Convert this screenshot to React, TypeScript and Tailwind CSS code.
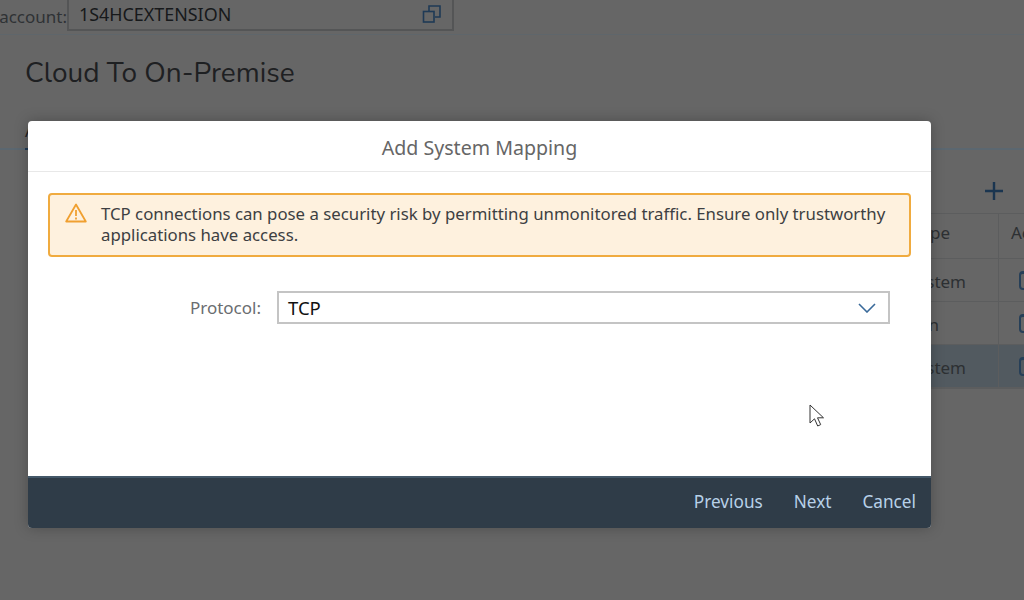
import React from "react";

function Row({ text, pad, tint }: { text: string; pad: string; tint?: boolean }) {
  return (
    <div className={`flex h-[43px] border-b border-[#5c5d5e] ${tint ? "bg-[#525a60]" : ""}`}>
      <div className={`flex-1 flex items-center justify-end pt-[3px] ${pad} border-r border-[#5c5d5e] text-[17px] text-[#2d3033]`}>{text}</div>
      <div className="w-[25px] flex items-center pl-[20px] overflow-hidden">
        <div className="w-[12px] h-[19px] shrink-0 border-2 border-t-[3px] border-[#263f58] rounded-sm" />
      </div>
    </div>
  );
}

export default function App() {
  return (
    <div className="relative w-[1024px] h-[600px] overflow-hidden bg-[#666666] font-['Noto_Sans','Open_Sans',sans-serif]">
      <div className="flex items-center h-[35px] border-b border-[#5f666b]">
        <span className="text-[17px] text-[#2f3235] w-[67px] overflow-hidden whitespace-nowrap flex justify-end">account:</span>
        <div className="flex items-center justify-between w-[387px] h-[31px] -mt-[4px] border-2 border-[#545556] border-t-0 pl-[10px] pr-[10px] text-[#17191b] text-[17.9px]">
          <span>1S4HCEXTENSION</span>
          <svg width="20" height="20" viewBox="0 0 20 20" fill="none" stroke="#1f3a56" strokeWidth="1.6">
            <rect x="1.5" y="7.5" width="10.5" height="10.5" />
            <path d="M7 7V2h11v11h-5" />
          </svg>
        </div>
      </div>
      <h1 className="mt-[20px] ml-[25px] text-[28px] leading-[36px] text-[#1e2022] font-['Nunito','Lato',sans-serif]">Cloud To On-Premise</h1>
      <div className="h-[59px] flex items-end pl-[25px] border-b-2 border-[#5b6770] text-[17px] text-[#1e2022]">
        <span className="-mb-[2px] h-[32px] border-b-2 border-[#1f3a56]">All</span>
      </div>
      <div className="flex justify-end mt-[23px] pr-[21px] h-[36px] items-center text-[#1a3550]">
        <svg width="18" height="18" viewBox="0 0 18 18" stroke="currentColor" strokeWidth="2.4">
          <path d="M9 0v18M0 9h18" />
        </svg>
      </div>
      <div className="ml-[28px] mt-[4px] border-y border-[#5c5d5e]">
        <div className="flex h-[45px] border-b border-[#5c5d5e]">
          <div className="flex-1 flex items-center justify-end pb-[6px] pr-[48px] border-r border-[#5c5d5e] text-[17px] text-[#2d3033]">pe</div>
          <div className="w-[25px] flex items-center pb-[6px] pl-[12px] text-[17px] text-[#2d3033] overflow-hidden">Ac</div>
        </div>
        <Row text="stem" pad="pr-[32px]" />
        <Row text="n" pad="pr-[59px]" />
        <Row text="stem" pad="pr-[32px]" tint />
      </div>

      <div className="absolute left-[28px] top-[121px] w-[903px] h-[407px] flex flex-col rounded-[4px] overflow-hidden bg-white shadow-[0_0_14px_rgba(0,0,0,0.25)]">
        <div className="h-[51px] shrink-0 flex items-center justify-center pt-[4px] border-b border-[#e8e8e8] text-[19.6px] text-[#666666]">Add System Mapping</div>
        <div className="flex-1 flex flex-col px-[20px] pt-[21px]">
          <div className="flex gap-[14px] h-[64px] pl-[15px] pr-[20px] pt-[8px] border-2 border-[#f0ab3f] rounded-[4px] bg-[#fef1de] text-[#3d3f42] text-[16.8px] leading-[21px]">
            <svg className="shrink-0" width="22" height="20" viewBox="0 0 22 20" fill="none" stroke="#f0a030" strokeWidth="1.8" strokeLinejoin="round">
              <path d="M11 1.5 1.2 18.5h19.6Z" />
              <path d="M11 7v6M11 14.5v2" />
            </svg>
            <p>TCP connections can pose a security risk by permitting unmonitored traffic. Ensure only trustworthy applications have access.</p>
          </div>
          <div className="flex items-center mt-[34px] pr-[21px]">
            <span className="w-[213px] text-right text-[17px] text-[#6a6d70]">Protocol:</span>
            <div className="ml-[16px] flex-1 h-[33px] flex items-center justify-between pl-[9px] pr-[12px] border-2 border-[#c4c4c4] text-[18.5px] text-[#111111]">
              <span>TCP</span>
              <svg width="18" height="10" viewBox="0 0 18 10" fill="none" stroke="#3a6a9a" strokeWidth="1.6">
                <path d="M1 1l8 8 8-8" />
              </svg>
            </div>
          </div>
        </div>
        <div className="h-[52px] shrink-0 flex items-center justify-end gap-[31px] pb-[2px] pr-[15px] bg-[#2f3c48] border-t-2 border-[#445869] text-[17.2px] text-[#b8d1e8]">
          <span>Previous</span>
          <span>Next</span>
          <span>Cancel</span>
        </div>
      </div>

      <svg className="absolute left-[809px] top-[404px]" width="17" height="25" viewBox="0 0 17 25" fill="#ffffff" stroke="#333333" strokeWidth="1">
        <path d="M1 1v18l4.5-4.2 3.2 7.2 3-1.4-3.2-6.8h6Z" />
      </svg>
    </div>
  );
}
